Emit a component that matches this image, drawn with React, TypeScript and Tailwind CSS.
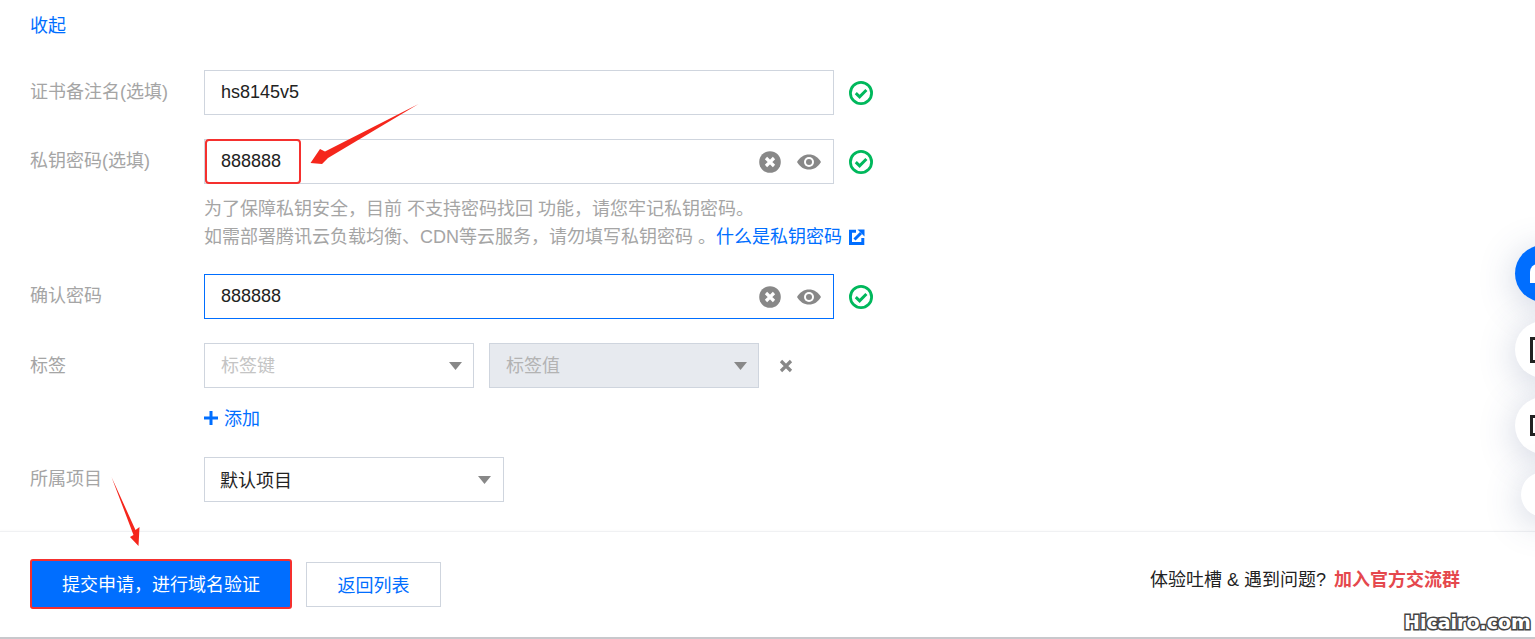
import type { ReactNode } from "react";

const font = { fontFamily: '"Liberation Sans", "Noto Sans CJK SC", sans-serif' };

function Row({ label, children, className, labelClass }: { label?: string; children: ReactNode; className?: string; labelClass?: string }) {
  return (
    <div className={"flex items-start " + (className ?? "")}>
      <label className={"w-[174px] shrink-0 h-[45px] text-[18px] text-[#a5a5a5] " + (labelClass ?? "leading-[44px]")}>{label}</label>
      {children}
    </div>
  );
}

function ClearIcon() {
  return (
    <svg width="22" height="22" viewBox="0 0 22 22">
      <circle cx="11" cy="11" r="10.8" fill="#888" />
      <path d="M7 7l8 8M15 7l-8 8" stroke="#fff" strokeWidth="3.2" />
    </svg>
  );
}

function EyeIcon() {
  return (
    <svg width="24" height="16" viewBox="0 0 24 16">
      <path d="M0 8C3 3 7 .5 12 .5S21 3 24 8c-3 5-7 7.5-12 7.5S3 13 0 8z" fill="#888" />
      <circle cx="12" cy="8" r="5" fill="#fff" />
      <circle cx="12" cy="8" r="3" fill="#888" />
    </svg>
  );
}

function CheckIcon() {
  return (
    <svg width="24" height="24" viewBox="0 0 24 24" className="ml-[15px] mt-[11px] shrink-0">
      <circle cx="12" cy="12" r="10.6" fill="none" stroke="#00b85c" strokeWidth="2.8" />
      <path d="M6.800 12.200l3.800 3.600L17.400 9" fill="none" stroke="#00b85c" strokeWidth="3" />
    </svg>
  );
}

function Caret({ color = "#888" }: { color?: string }) {
  return (
    <svg width="13" height="8" viewBox="0 0 13 8" className="shrink-0">
      <path d="M0 0h13L6.500 8z" fill={color} />
    </svg>
  );
}

function PasswordInput({ active }: { active?: boolean }) {
  return (
    <div className={"flex items-center w-[630px] h-[45px] border pl-4 pr-[12px] bg-white " + (active ? "border-[#006eff]" : "border-[#cfd5de]")}>
      <span className="flex-1 text-[18px] text-[#222]">888888</span>
      <ClearIcon />
      <span className="ml-[16px] flex"><EyeIcon /></span>
    </div>
  );
}

function SideButton({ color, size, children }: { color: string; size: string; children?: ReactNode }) {
  return (
    <div className={"rounded-full flex items-center shadow-[0_6px_36px_rgba(60,80,130,0.26)] " + color + " " + size}>
      {children}
    </div>
  );
}

export default function App() {
  return (
    <div style={font} className="relative w-[1535px] h-[639px] overflow-hidden bg-white">
      <div className="h-[531px] px-[30px] pt-[12px]">
        <a className="block h-[58px] leading-[28px] text-[18px] text-[#006eff]">收起</a>

        <Row className="mb-[24px]" label="证书备注名(选填)">
          <div className="flex items-center w-[630px] h-[45px] border border-[#cfd5de] pl-4 text-[18px] text-[#222]">hs8145v5</div>
          <CheckIcon />
        </Row>

        <Row label="私钥密码(选填)">
          <PasswordInput />
          <CheckIcon />
        </Row>
        <div className="ml-[174px] mt-[11px] mb-[23px] text-[18px] leading-[28px] h-[56px] text-[#a5a5a5]">
          <p>为了保障私钥安全，目前 不支持密码找回 功能，请您牢记私钥密码。</p>
          <p className="flex items-center">
            如需部署腾讯云负载均衡、CDN等云服务，请勿填写私钥密码 。<a className="text-[#006eff]">什么是私钥密码</a>
            <svg width="16" height="16" viewBox="0 0 16 16" className="ml-[7px]">
              <path d="M7 2.200H1.500v12.300H13.800V9" fill="none" stroke="#006eff" strokeWidth="3" />
              <path d="M8.500 .5H15.500V7.500z" fill="#006eff" />
              <path d="M5.500 10.500L12 4" stroke="#006eff" strokeWidth="3" />
            </svg>
          </p>
        </div>

        <Row className="mb-[24px]" label="确认密码">
          <PasswordInput active />
          <CheckIcon />
        </Row>

        <Row label="标签" labelClass="leading-[46px]">
          <div className="flex items-center w-[270px] h-[45px] border border-[#cfd5de] pl-4 pr-[11px] text-[18px] text-[#c4c4c4]">
            <span className="flex-1 pt-[2px]">标签键</span>
            <Caret />
          </div>
          <div className="flex items-center w-[270px] h-[45px] ml-[15px] border border-[#cfd5de] bg-[#e7eaef] pl-4 pr-[11px] text-[18px] text-[#b3b3b3]">
            <span className="flex-1 pt-[2px]">标签值</span>
            <Caret />
          </div>
          <svg width="14" height="14" viewBox="0 0 14 14" className="ml-5 mt-[16px]">
            <path d="M2 2l10 10M12 2L2 12" stroke="#888" strokeWidth="3.2" />
          </svg>
        </Row>
        <div className="ml-[174px] mt-[16px] mb-[25px] h-[28px] flex items-center text-[18px] text-[#006eff]">
          <svg width="14" height="14" viewBox="0 0 14 14" className="mr-[5px]">
            <path d="M7 0v14M0 7h14" stroke="#006eff" strokeWidth="3" />
          </svg>
          <span className="pt-[2px] pl-[1px]">添加</span>
        </div>

        <Row label="所属项目">
          <div className="flex items-center w-[300px] h-[45px] border border-[#cfd5de] pl-[15px] pr-[12px] text-[18px] text-[#222]">
            <span className="flex-1 pt-[3px]">默认项目</span>
            <Caret />
          </div>
        </Row>
      </div>

      <div className="h-[106px] border-t border-[#f0f1f3] pl-[30px] pr-[75px] pt-[27px] flex items-start shadow-[0_-1px_2px_rgba(0,0,0,0.02)]">
        <button className="w-[262px] h-[50px] pt-[3px] rounded-[3px] border-2 border-[#f5302e] bg-[#006eff] text-white text-[18px]">提交申请，进行域名验证</button>
        <button className="w-[135px] h-[45px] mt-[3px] pt-[3px] ml-[14px] border border-[#cfd5de] bg-white text-[18px] text-[#006eff]">返回列表</button>
        <div className="ml-auto mt-[8px] text-[18px] leading-[26px] text-[#222]">
          体验吐槽 &amp; 遇到问题? <a className="ml-[3px] font-bold text-[#e5484d]">加入官方交流群</a>
        </div>
      </div>
      <div className="h-[2px] bg-[#c8c8cc]" />

      {/* annotations on top of the shot */}
      <div className="absolute left-[205px] top-[139px] w-[96px] h-[45px] rounded-[4px] border-2 border-[#f5302e]" />
      <svg width="1535" height="639" className="absolute left-0 top-0 pointer-events-none">
        <path d="M418.500 104L325 151.500L320 149L310.500 163L322 164L328 158z" fill="#f5261c" />
        <path d="M111.500 477L135.500 530L139.500 527L138.500 546L130 537L133.500 535z" fill="#f5261c" />
      </svg>

      <div className="absolute left-[1515px] top-[245px] flex flex-col items-start gap-[19px]">
        <SideButton color="bg-[#006eff]" size="w-[57px] h-[57px]">
          <span className="ml-[15px] w-[8px] h-[19px] bg-white rounded-tl-[8px]" />
        </SideButton>
        <SideButton color="bg-white" size="w-[57px] h-[57px]">
          <span className="ml-[15px] w-[8px] h-[26px] border-[3px] border-r-0 border-[#222]" />
        </SideButton>
        <SideButton color="bg-white" size="w-[57px] h-[57px]">
          <span className="ml-[15px] w-[8px] h-[21px] border-[3px] border-r-0 border-[#222]" />
        </SideButton>
        <div className="ml-[6px] -mt-[1px]">
          <SideButton color="bg-white" size="w-[45px] h-[45px]" />
        </div>
      </div>

      <div className="absolute left-[1404px] top-[609px] text-[19px] leading-[26px] font-bold text-white [font-family:'DejaVu_Sans',sans-serif] [-webkit-text-stroke:3px_#444] [paint-order:stroke_fill]">
        Hicairo.com
      </div>
    </div>
  );
}
